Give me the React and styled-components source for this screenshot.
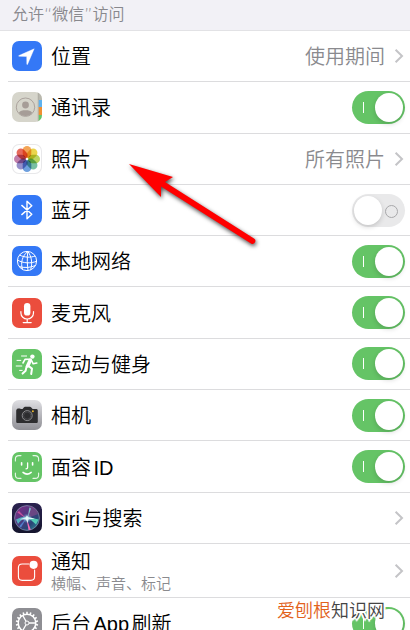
import React, { useState } from 'react';
import styled, { createGlobalStyle } from 'styled-components';


const petals = ['#f08f2c', '#e6cb20', '#a9c93c', '#56b08c', '#4a88d6', '#7b74bd', '#b25f96', '#e04331'];

const gearTeeth = Array.from({ length: 18 }, (_, i) => i * 20);

function LocationIcon() {
    return (
        <AppIcon $bg='#3478f6' viewBox='0 0 30 30'>
            <path d='M22.2 7.8 L15.6 23.2 Q15 24.2 14.8 23 L14.7 15.5 L7.2 15.3 Q6 15 7 14.5 Z' fill='#fff' stroke='#fff' strokeWidth='0.4' strokeLinejoin='round' />
        </AppIcon>
    );
}

function ContactsIcon() {
    return (
        <AppIcon $bg='#d6d5cb' viewBox='0 0 30 30'>
            <rect x='26' width='4' height='8' fill='#b9b8ae' />
            <rect x='26.5' y='8' width='3.5' height='7' fill='#5fb2ee' />
            <rect x='26.5' y='15' width='3.5' height='8' fill='#ef8f33' />
            <rect x='26.5' y='23' width='3.5' height='7' fill='#63c767' />
            <path d='M26.2 0 V30' stroke='#a9a89f' strokeWidth='0.7' />
            <circle cx='13.5' cy='15.2' r='9.2' fill='none' stroke='#a69d97' strokeWidth='0.9' />
            <circle cx='13.5' cy='13' r='3.4' fill='#a69d97' />
            <path d='M6.8 20.8 C8 18.8 10.5 18.2 13.5 18.2 C16.5 18.2 19 18.8 20.2 20.8 C18.5 23 16.2 24 13.5 24 C10.8 24 8.5 23 6.8 20.8 Z' fill='#a69d97' />
        </AppIcon>
    );
}

function PhotosIcon() {
    return (
        <AppIcon $bg='#fff' $outlined viewBox='0 0 30 30'>
            {petals.map((color, i) => (
                <Petal
                    key={color}
                    x='10.7' y='2' width='8.6' height='12' rx='4.3'
                    fill={color}
                    transform={`rotate(${i * 45} 15 15)`}
                />
            ))}
            <circle cx='15' cy='15' r='1.2' fill='#fff' opacity='0.7' />
        </AppIcon>
    );
}

function BluetoothIcon() {
    return (
        <AppIcon $bg='#3478f6' viewBox='0 0 30 30'>
            <path d='M9.8 10.4 L19.8 19.2 L15 23.8 V6.2 L19.8 10.8 L9.8 19.6' fill='none' stroke='#fff' strokeWidth='1.4' strokeLinejoin='round' strokeLinecap='round' />
        </AppIcon>
    );
}

function NetworkIcon() {
    return (
        <AppIcon $bg='#3478f6' viewBox='0 0 30 30'>
            <g fill='none' stroke='#fff' strokeWidth='1'>
                <circle cx='15' cy='15' r='9.6' />
                <path d='M15.8 5.5 C10 10 8.5 17 10.5 23.4' />
                <path d='M15.8 5.5 C19.5 10 20.8 17.5 18.6 23.8' />
                <path d='M15.8 5.5 C15 12 15.2 19 16 24.5' />
                <path d='M7.6 9 C12 11.5 18.5 11.8 23.2 10' />
                <path d='M5.4 14 C11 17.5 19.5 17.6 24.6 15.2' />
                <path d='M7.2 20.6 C12 22 18.5 21.8 23.4 19.5' />
            </g>
        </AppIcon>
    );
}

function MicrophoneIcon() {
    return (
        <AppIcon $bg='#eb4d3d' viewBox='0 0 30 30'>
            <rect x='12' y='5' width='6.4' height='12.6' rx='3.2' fill='#fff' />
            <path d='M8.9 13.5 V15 A6.3 6 0 0 0 21.5 15 V13.5 M15.2 21 V24.4 M11.2 24.6 H19.2' fill='none' stroke='#fff' strokeWidth='1.2' strokeLinecap='round' />
        </AppIcon>
    );
}

function FitnessIcon() {
    return (
        <AppIcon $bg='#65c466' viewBox='0 0 30 30'>
            <circle cx='20.4' cy='7.6' r='2.2' fill='#fff' />
            <g fill='none' stroke='#fff' strokeLinecap='round' strokeLinejoin='round'>
                <path d='M18.3 11.2 L15.6 17' strokeWidth='3.6' />
                <path d='M17.2 10.2 L13 10.4 L11 14' strokeWidth='1.6' />
                <path d='M19.6 11.5 L21.2 14.8 L24.8 14' strokeWidth='1.6' />
                <path d='M16.6 17 L20 19.6 L19.2 25' strokeWidth='2' />
                <path d='M14.6 17.5 L13.6 21.8 L10.6 24.6' strokeWidth='2' />
                <path d='M9.5 7 H14.6 M5 11.4 H8.8 M4.2 17 H9.8 M7.6 21.4 H10.2' strokeWidth='1' />
            </g>
        </AppIcon>
    );
}

function CameraIcon() {
    return (
        <AppIcon $bg='linear-gradient(#dfdfe3, #8f8f95)' viewBox='0 0 30 30'>
            <path d='M5.4 9 V8.4 H8.4 V9 L10.6 9 L12 7.2 Q12.4 6.8 13 6.8 H18 Q18.6 6.8 19 7.2 L20.6 9 H24.6 Q25.8 9.2 25.8 10.4 V21.8 Q25.8 23 24.6 23 H5.4 Q4.2 23 4.2 21.8 V10.4 Q4.2 9.2 5.4 9 Z' fill='#2d2d2f' />
            <circle cx='15.2' cy='15.6' r='5' fill='#2d2d2f' stroke='#a3a3a6' strokeWidth='0.8' />
            <circle cx='15.2' cy='15.6' r='3.6' fill='none' stroke='#56565a' strokeWidth='0.6' />
            <circle cx='20.9' cy='11.2' r='1' fill='#e8b62e' />
        </AppIcon>
    );
}

function FaceIdIcon() {
    return (
        <AppIcon $bg='#65c466' viewBox='0 0 30 30'>
            <g fill='none' stroke='#fff' strokeLinecap='round' strokeLinejoin='round'>
                <path d='M3.4 9 V7 Q3.4 3.6 7 3.6 H9 M21 3.6 H23 Q26.6 3.6 26.6 7 V9 M26.6 21 V23 Q26.6 26.4 23 26.4 H21 M9 26.4 H7 Q3.4 26.4 3.4 23 V21' strokeWidth='1.1' opacity='0.85' />
                <path d='M9.6 10.8 V13 M20.6 10.8 V13' strokeWidth='1.6' />
                <path d='M15.6 10.8 V15.6 Q15.6 16.8 14 16.8' strokeWidth='1.3' />
                <path d='M11 20.4 Q15 23.8 19.2 20.4' strokeWidth='1.5' />
            </g>
        </AppIcon>
    );
}

function SiriIcon() {
    return (
        <AppIcon $bg='linear-gradient(#2b2350, #14142c)' viewBox='0 0 30 30'>
            <defs>
                <linearGradient id='orb' x1='0' y1='0' x2='1' y2='1'>
                    <stop offset='0' stopColor='#8a2a86' />
                    <stop offset='0.45' stopColor='#4a3a80' />
                    <stop offset='0.7' stopColor='#2a4676' />
                    <stop offset='1' stopColor='#2a9a9a' />
                </linearGradient>
                <radialGradient id='glow'>
                    <stop offset='0' stopColor='#fff' />
                    <stop offset='0.35' stopColor='#bff' stopOpacity='0.7' />
                    <stop offset='1' stopColor='#6cf' stopOpacity='0' />
                </radialGradient>
            </defs>
            <circle cx='15' cy='15' r='12.4' fill='url(#orb)' stroke='#8a9ab4' strokeWidth='0.7' />
            <path d='M15 15 L17.5 3.2 C22 4 25 7 26.4 11 Z' fill='#7b4a86' opacity='0.7' />
            <path d='M4 16.5 Q10 13 16 14 Q10 15.5 6 21 Z' fill='#55d6d4' opacity='0.75' />
            <path d='M15.2 13.8 L26.6 16.4 L24 21.5 Z' fill='#59e0c0' opacity='0.85' />
            <path d='M14.2 14.4 L18.8 26.8 L16.6 27.2 Z' fill='#f06ab8' />
            <path d='M14.6 15 L9 24.6 L7.2 23.2 Z' fill='#5a9af0' opacity='0.7' />
            <path d='M15.6 15.4 L17.4 4.6 L19 5.4 Z' fill='#7fe6e0' opacity='0.8' />
            <path d='M14.8 16 L5.4 9.4 L7 8 Z' fill='#e65aa4' opacity='0.75' />
            <path d='M15 12.2 L16.2 14.2 L23 15.6 L16.4 16.6 L15.6 20 L14 16.6 L7.6 16.2 L13.6 14.4 Z' fill='#fff' opacity='0.9' />
            <circle cx='15' cy='15.3' r='5' fill='url(#glow)' opacity='0.7' />
        </AppIcon>
    );
}

function NotificationsIcon() {
    return (
        <AppIcon $bg='#eb4d3d' viewBox='0 0 30 30'>
            <path d='M16.8 8 H10.2 Q6.4 8 6.4 11.8 V20.6 Q6.4 24.4 10.2 24.4 H18.8 Q22.6 24.4 22.6 20.6 V14' fill='none' stroke='#fff' strokeWidth='1.1' strokeLinecap='round' />
            <circle cx='21.6' cy='8.8' r='4.1' fill='#fff' />
        </AppIcon>
    );
}

function RefreshIcon() {
    return (
        <AppIcon $bg='#8e8e93' viewBox='0 0 30 30'>
            <g fill='none' stroke='#fff'>
                <circle cx='15' cy='15' r='8.8' strokeWidth='1.5' />
                {gearTeeth.map((deg) => (
                    <path key={deg} d='M15 6.4 V3.8' strokeWidth='1.6' transform={`rotate(${deg} 15 15)`} />
                ))}
                <circle cx='15' cy='15' r='2' strokeWidth='1' />
                <path d='M17 15 H23.6 M14 13.2 L10.7 7.4 M14 16.8 L10.7 22.6' strokeWidth='1.3' />
            </g>
        </AppIcon>
    );
}

function Chevron() {
    return (
        <ChevronSvg viewBox='0 0 10 16' aria-hidden='true'>
            <path d='M1.6 1.8 L8 8 L1.6 14.2' fill='none' stroke='#c4c4c7' strokeWidth='2' />
        </ChevronSvg>
    );
}

function LinkRow({ icon, title, detail, value }) {
    return (
        <LinkItem href='#' $tall={Boolean(detail)}>
            {icon}
            <RowBody>
                <Title $compact={Boolean(detail)}>{title}</Title>
                {detail && <Detail>{detail}</Detail>}
            </RowBody>
            {value && <Value>{value}</Value>}
            <Chevron />
        </LinkItem>
    );
}

function SwitchRow({ icon, title, defaultOn = true }) {
    const [on, setOn] = useState(defaultOn)

    return (
        <SwitchItem>
            {icon}
            <RowBody>
                <Title>{title}</Title>
            </RowBody>
            <Switch type='checkbox' role='switch' checked={on} onChange={() => setOn(!on)} />
        </SwitchItem>
    );
}

function App() {
    return (
        <Screen>
            <GlobalStyle />
            <SectionHeader>允许“微信”访问</SectionHeader>
            <EvenRows>
                <LinkRow icon={<LocationIcon />} title='位置' value='使用期间' />
                <SwitchRow icon={<ContactsIcon />} title='通讯录' />
                <LinkRow icon={<PhotosIcon />} title='照片' value='所有照片' />
                <SwitchRow icon={<BluetoothIcon />} title='蓝牙' defaultOn={false} />
                <SwitchRow icon={<NetworkIcon />} title='本地网络' />
                <SwitchRow icon={<MicrophoneIcon />} title='麦克风' />
                <SwitchRow icon={<FitnessIcon />} title='运动与健身' />
                <SwitchRow icon={<CameraIcon />} title='相机' />
                <SwitchRow icon={<FaceIdIcon />} title='面容ID' />
                <LinkRow icon={<SiriIcon />} title='Siri与搜索' />
            </EvenRows>
            <LinkRow icon={<NotificationsIcon />} title='通知' detail='横幅、声音、标记' />
            <SwitchRow icon={<RefreshIcon />} title='后台App刷新' />

            <Arrow viewBox='0 0 140 100' aria-hidden='true'>
                <path d='M9 14 L53 27 L45 32 L134 88.6 A2.8 2.8 0 0 1 131 93.4 L41 36.5 L41 47 Z' fill='#f00' />
            </Arrow>
            <Watermark><em>爱刨根</em>知识网</Watermark>
        </Screen>
    );
}

const GlobalStyle = createGlobalStyle`
    * {
        box-sizing: border-box;
    }
    body {
        margin: 0;
        background: #fff;
        font-family: "Liberation Sans", "Noto Sans CJK SC", sans-serif;
        font-weight: 350;
    }
`

const Screen = styled.main`
    position: relative;
    height: 100vh;
    overflow: hidden;
    color: #000;
    text-autospace: normal;
`

const SectionHeader = styled.h2`
    margin: 0;
    height: 31px;
    padding: 0 12px;
    border-bottom: 1px solid #e2e2e5;
    background: #f2f1f6;
    color: #88888d;
    font-family: "DejaVu Sans", "Noto Sans CJK SC", sans-serif;
    font-size: 16px;
    font-weight: 350;
    line-height: 30px;
`

const EvenRows = styled.section`
    display: grid;
    grid-auto-rows: 1fr;
    min-height: 513px;
`

const Row = styled.div`
    display: flex;
    align-items: center;
    min-height: ${({ $tall }) => ($tall ? 54 : 51)}px;
    margin-left: 8px;
    padding: 0 5px 0 4px;
    border-bottom: 1px solid #dcdcde;
`

const LinkItem = styled(Row).attrs({ as: 'a' })`
    color: inherit;
    text-decoration: none;
`

const SwitchItem = styled(Row).attrs({ as: 'label' })`
    cursor: pointer;
`

const AppIcon = styled.svg`
    flex: none;
    width: 30px;
    height: 30px;
    border-radius: 7px;
    background: ${({ $bg }) => $bg};
    box-shadow: ${({ $outlined }) => ($outlined ? 'inset 0 0 0 1px #e8e8ea' : 'none')};
    isolation: isolate;
`

const Petal = styled.rect`
    opacity: 0.8;
    mix-blend-mode: multiply;
`

const RowBody = styled.div`
    display: flex;
    flex: 1;
    flex-direction: column;
    padding: 2px 0 0 9px;
`

const Title = styled.span`
    font-size: 20px;
    line-height: ${({ $compact }) => ($compact ? 25 : 30)}px;
`

const Detail = styled.span`
    color: #8a8a8e;
    font-size: 15px;
    line-height: 18px;
`

const Value = styled.span`
    margin-right: 9px;
    padding-top: 2px;
    color: #8a8a8e;
    font-size: 20px;
    line-height: 30px;
`

const ChevronSvg = styled.svg`
    flex: none;
    width: 10px;
    height: 16px;
    margin-right: 1px;
`

const Switch = styled.input`
    position: relative;
    flex: none;
    appearance: none;
    width: 53px;
    height: 33px;
    margin: 0;
    border-radius: 17px;
    background: #e9e9ea;
    cursor: pointer;

    &::before {
        content: "";
        position: absolute;
        top: 11px;
        right: 7px;
        width: 11px;
        height: 11px;
        border: 1px solid #a8a8aa;
        border-radius: 50%;
    }

    &::after {
        content: "";
        position: absolute;
        top: 2px;
        left: 2px;
        width: 28px;
        height: 29px;
        border-radius: 50%;
        background: #fff;
        box-shadow: 0 2px 5px rgba(0, 0, 0, 0.16);
    }

    &:checked {
        background: #65c466;
    }

    &:checked::before {
        right: auto;
        left: 11px;
        width: 1px;
        border: 0;
        border-radius: 0;
        background: #fff;
    }

    &:checked::after {
        left: 23px;
    }
`

const Arrow = styled.svg`
    position: absolute;
    top: 150px;
    left: 120px;
    width: 140px;
    height: 100px;
    overflow: visible;
    pointer-events: none;
    filter: drop-shadow(1px 2px 2px rgba(0, 0, 0, 0.7));
`

const Watermark = styled.div`
    position: absolute;
    right: 25px;
    bottom: 6px;
    color: #444;
    font-size: 18px;
    line-height: 26px;
    text-shadow: 1px 1px 0 #fff, -1px -1px 0 #fff, 1px -1px 0 #fff, -1px 1px 0 #fff, 2px 0 0 #fff, -2px 0 0 #fff, 0 2px 0 #fff, 0 -2px 0 #fff, 0 3px 1px #fff;

    em {
        color: #e2621b;
        font-style: normal;
    }
`
export default App;
